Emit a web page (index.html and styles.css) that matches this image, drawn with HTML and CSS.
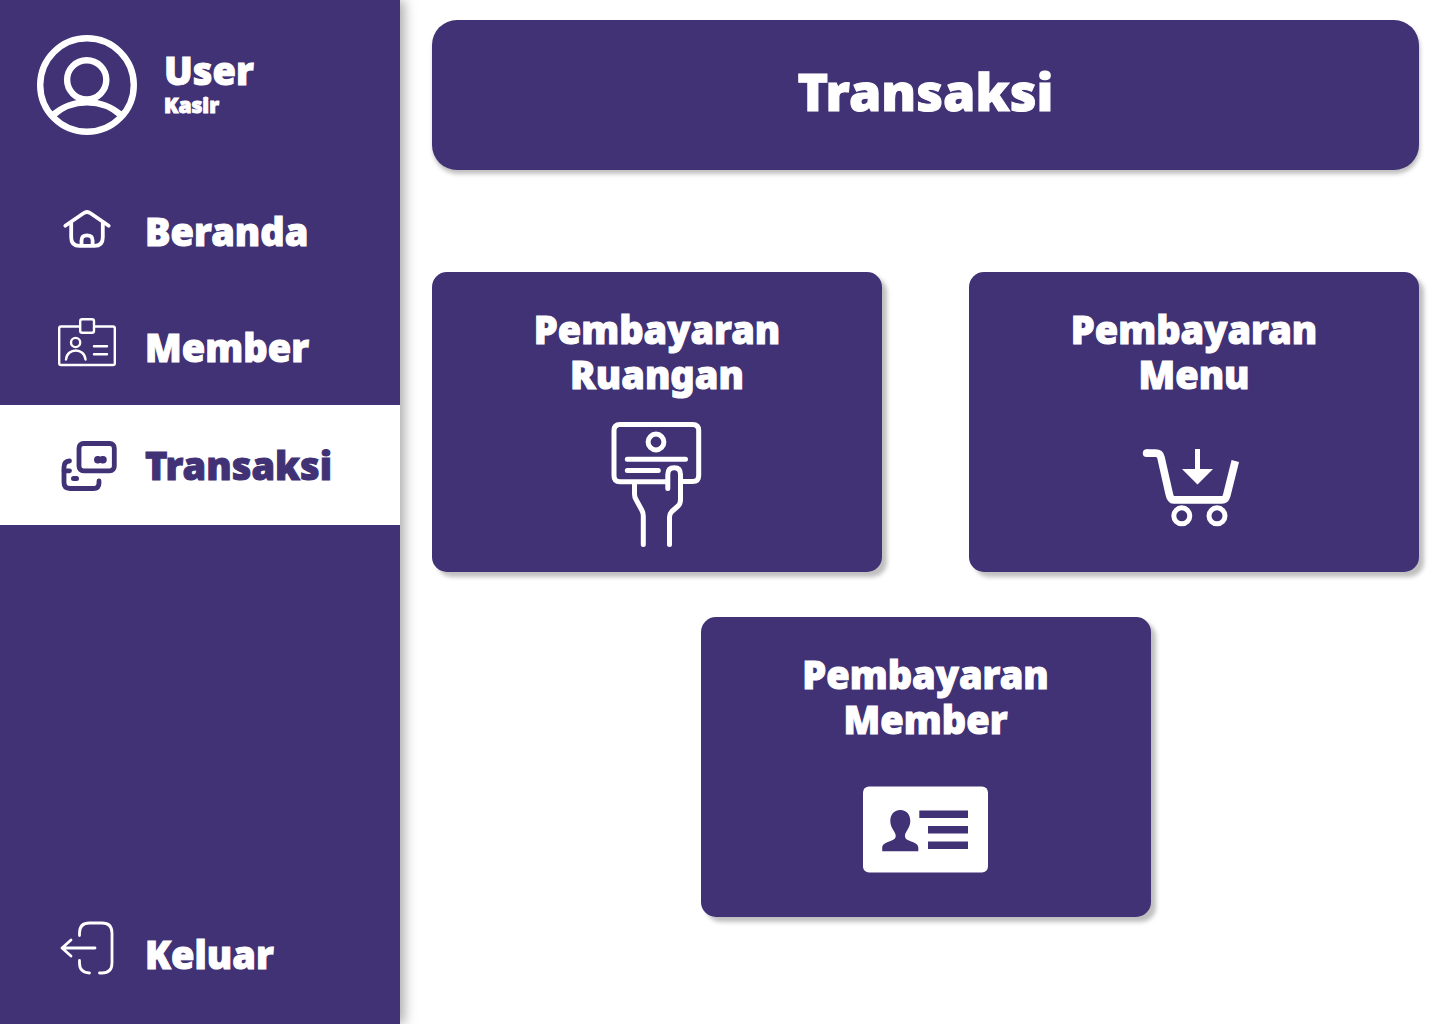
FILE: index.html
```html
<!DOCTYPE html>
<html lang="id">
<head>
<meta charset="utf-8">
<meta name="viewport" content="width=device-width, initial-scale=1">
<title>Transaksi</title>
<link rel="stylesheet" href="styles.css">
</head>
<body>
<div class="app">
  <aside class="sidebar">
    <div class="profile">
      <svg class="avatar" viewBox="0 0 100 100" aria-hidden="true">
        <g fill="none" stroke="currentColor" stroke-width="6.4">
          <circle cx="50" cy="50" r="46.8"/>
          <circle cx="49.700" cy="44.800" r="19.600"/>
          <path d="M15.500 80.500C35 63 65 63 84.500 80.500"/>
        </g>
      </svg>
      <div>
        <div class="profile-name">User</div>
        <div class="profile-role">Kasir</div>
      </div>
    </div>
    <nav class="nav">
      <a class="nav-item" href="#beranda">
        <svg class="nav-icon" viewBox="58 202 58 58" aria-hidden="true">
          <g fill="none" stroke="currentColor" stroke-width="3.800" stroke-linecap="round" stroke-linejoin="round">
            <path d="M65.300 225.700L83.500 213.300Q87 210.800 90.500 213.300L108.700 225.700"/>
            <path d="M71.200 223V237.500Q71.200 245.900 79.500 245.900H94.500Q102.800 245.900 102.800 237.500V223"/>
            <path d="M81.500 245V240.500Q81.500 235.300 87 235.300Q92.600 235.300 92.600 240.500V245"/>
          </g>
        </svg>
        Beranda
      </a>
      <a class="nav-item" href="#member">
        <svg class="nav-icon" viewBox="58 318 58 58" aria-hidden="true">
          <g fill="none" stroke="currentColor" stroke-width="2.400" stroke-linecap="round" stroke-linejoin="round">
            <path d="M79.500 326.500H61Q59.200 326.500 59.200 328.300V363.200Q59.200 365 61 365H113Q114.800 365 114.800 363.200V328.300Q114.800 326.500 113 326.500H94.500"/>
            <rect x="80.200" y="319.200" width="13.800" height="13.600" rx="2"/>
            <circle cx="75.600" cy="342.500" r="4.600"/>
            <path d="M66 359.500C67 347.500 84.500 347.500 85.500 359.500"/>
            <path d="M94 346.200H107M94 354.300H107"/>
          </g>
        </svg>
        Member
      </a>
      <a class="nav-item nav-item-active" href="#transaksi" aria-current="page">
        <svg class="nav-icon" viewBox="58 436 58 58" aria-hidden="true">
          <g fill="none" stroke="currentColor" stroke-width="4.800" stroke-linecap="round" stroke-linejoin="round">
            <rect x="79" y="443.500" width="35.300" height="27.300" rx="4.500"/>
            <path d="M69.500 461Q64 461.500 64 467V482.500Q64 488.500 70 488.500H93.500Q99 488.500 99 483V481"/>
            <path d="M64 470.800H69.500"/>
          </g>
          <path d="M97.700 456C99.500 456 99.500 456.600 100.300 456.600S101.200 456 103 456Q106.800 456.200 106.800 459.800T103 463.600C101.200 463.600 101.100 463 100.300 463S99.500 463.600 97.700 463.600Q94 463.400 94 459.800T97.700 456Z" fill="currentColor"/>
          <rect x="71" y="476" width="8" height="5" rx="2.500" fill="currentColor"/>
        </svg>
        Transaksi
      </a>
    </nav>
    <a class="nav-item nav-logout" href="#keluar">
      <svg class="nav-icon" viewBox="58 925 58 58" aria-hidden="true">
        <g fill="none" stroke="currentColor" stroke-width="2.800" stroke-linecap="round" stroke-linejoin="round">
          <path d="M79.500 935.500V933Q79.500 923 89.500 923H102Q112 923 112 933V963Q112 973 102 973H99.500"/>
          <path d="M79.500 960.500V963Q79.500 972.600 89.500 973"/>
          <path d="M95 948H62M71 940L62 948L71 956"/>
        </g>
      </svg>
      Keluar
    </a>
  </aside>
  <main class="main">
    <header class="banner">
      <h1 class="banner-title">Transaksi</h1>
    </header>
    <div class="cards">
      <a class="card" href="#ruangan">
        <h2 class="card-title">Pembayaran<br>Ruangan</h2>
        <svg class="card-icon" viewBox="595 422 125 125" aria-hidden="true">
          <g fill="none" stroke="currentColor" stroke-width="5" stroke-linecap="round" stroke-linejoin="round">
            <path d="M667 481.800H620Q614 481.800 614 475.800V430.500Q614 424.500 620 424.500H692.700Q698.700 424.500 698.700 430.500V475.500Q698.700 481.500 692.700 481.500H682"/>
            <circle cx="656" cy="442" r="7.900"/>
            <path d="M627.300 459.300H685.500M627.300 470.500H658.300"/>
            <path d="M634.500 483V494Q634.500 497 636 499.500L642 510.500Q643.300 513 643.300 516V544.500"/>
            <path d="M667.800 488.500V474.500Q667.800 467.800 674.300 467.800Q680.500 467.800 680.500 474.500V500Q680.500 504 677.500 506.500L671.800 511.500Q669.500 514 669.500 517V544.500"/>
          </g>
        </svg>
      </a>
      <a class="card" href="#menu">
        <h2 class="card-title">Pembayaran<br>Menu</h2>
        <svg class="card-icon" viewBox="1132 422 125 125" aria-hidden="true">
          <path d="M1146.500 453.200H1155.500Q1160 453.200 1161 457.500L1169 493Q1170.300 499.900 1173.500 499.900H1222Q1225.500 499.900 1226.700 495.500L1235.300 461" fill="none" stroke="currentColor" stroke-width="7.700"/>
          <circle cx="1146.700" cy="453.200" r="3.850" fill="currentColor"/>
          <path d="M1195 449H1200V469H1213L1197.500 484.500L1182 469H1195Z" fill="currentColor"/>
          <circle cx="1181.800" cy="515.800" r="8" fill="none" stroke="currentColor" stroke-width="5"/>
          <circle cx="1217" cy="515.800" r="8" fill="none" stroke="currentColor" stroke-width="5"/>
        </svg>
      </a>
      <a class="card" href="#pembayaran-member">
        <h2 class="card-title">Pembayaran<br>Member</h2>
        <svg class="card-icon" viewBox="863 767 125 125" aria-hidden="true">
          <rect x="863" y="786.500" width="125" height="86" rx="6" fill="currentColor"/>
          <g class="icon-cutout">
            <path d="M919.300 810.500H968V818H919.300ZM928 826H968V833.600H928ZM928 841.500H968V849H928Z"/>
            <path d="M900.300 810C907 810 910.300 815 910.300 821C910.300 828 905 832 905 835.500C905 838.500 906 839.300 909.500 840.800C914 842.700 918.300 843.500 918.300 848V851.200H882.200V848C882.200 843.500 886.500 842.700 891 840.800C894.500 839.300 895.700 838.500 895.700 835.500C895.700 832 890.300 828 890.300 821C890.300 815 893.600 810 900.300 810Z"/>
          </g>
        </svg>
      </a>
    </div>
  </main>
</div>
</body>
</html>
```
FILE: styles.css
```css
:root {
  --purple: #413175;
  --white: #ffffff;
}

* {
  box-sizing: border-box;
}

body {
  margin: 0;
  background: var(--white);
  color: var(--white);
  font-family: "Noto Sans", "Open Sans", sans-serif;
  font-weight: 900;
  -webkit-text-stroke: 1px currentColor;
}

h1,
h2 {
  margin: 0;
  font-weight: 900;
}

a {
  color: inherit;
  text-decoration: none;
}

.app {
  display: flex;
  min-height: 100vh;
}

.sidebar {
  display: flex;
  flex: 0 0 400px;
  flex-direction: column;
  padding-bottom: 12px;
  background: var(--purple);
  box-shadow: 4px 0 12px rgba(0, 0, 0, 0.35);
}

.profile {
  display: flex;
  align-items: center;
  gap: 27px;
  padding: 35px 37px 38px;
}

.avatar {
  width: 100px;
  height: 100px;
}

.profile-name {
  font-size: 38px;
  line-height: 40px;
}

.profile-role {
  font-size: 21px;
  line-height: 30px;
}

.nav-item {
  display: flex;
  align-items: center;
  gap: 29px;
  height: 116px;
  padding: 0 58px;
  font-size: 38px;
  line-height: 45px;
}

.nav-item-active {
  height: 120px;
  background: var(--white);
  color: var(--purple);
}

.nav-icon {
  flex: none;
  width: 58px;
  height: 58px;
  overflow: visible;
}

.nav-logout {
  margin-top: auto;
}

.main {
  flex: 1;
  padding: 20px 21px 20px 32px;
}

.banner {
  display: flex;
  align-items: center;
  justify-content: center;
  height: 150px;
  padding-bottom: 8px;
  border-radius: 25px;
  background: var(--purple);
  box-shadow: 1px 4px 4px rgba(0, 0, 0, 0.25);
}

.banner-title {
  font-size: 52px;
  line-height: 60px;
}

.cards {
  display: flex;
  flex-wrap: wrap;
  justify-content: center;
  gap: 45px 87px;
  margin-top: 102px;
}

.card {
  display: flex;
  flex: 0 1 450px;
  flex-direction: column;
  align-items: center;
  gap: 25px;
  padding: 35px 20px 25px;
  border-radius: 15px;
  background: var(--purple);
  box-shadow: 5px 5px 4px rgba(0, 0, 0, 0.25);
}

.card-title {
  font-size: 38px;
  line-height: 45px;
  text-align: center;
}

.card-icon {
  width: 125px;
  height: 125px;
}

.icon-cutout {
  fill: var(--purple);
}
```
